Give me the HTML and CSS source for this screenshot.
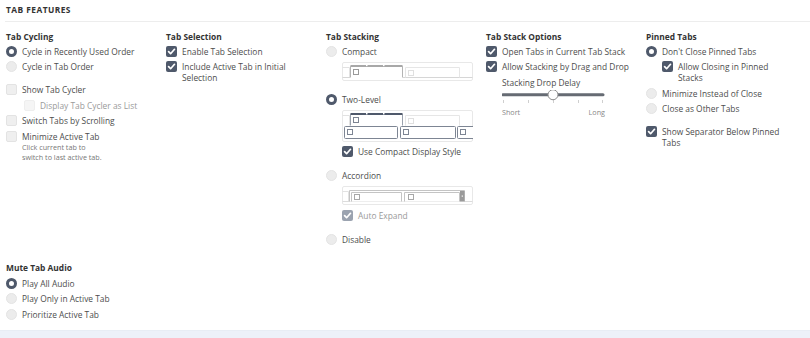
FILE: index.html
```html
<!DOCTYPE html>
<html lang="en">
<head>
<meta charset="utf-8">
<title>Tab Features</title>
<link rel="stylesheet" href="styles.css">
</head>
<body>
<div class="page">
  <div class="head">TAB FEATURES</div>
  <div class="grid">
    <!-- Tab Cycling -->
    <div class="col">
      <div class="title">Tab Cycling</div>
      <div class="opt"><span class="rb on"></span><span class="lbl">Cycle in Recently Used Order</span></div>
      <div class="opt"><span class="rb"></span><span class="lbl">Cycle in Tab Order</span></div>
      <div class="opt gap"><span class="cb"></span><span class="lbl">Show Tab Cycler</span></div>
      <div class="opt nest dis"><span class="cb"></span><span class="lbl">Display Tab Cycler as List</span></div>
      <div class="opt"><span class="cb"></span><span class="lbl">Switch Tabs by Scrolling</span></div>
      <div class="opt"><span class="cb"></span><span class="lbl">Minimize Active Tab</span></div>
      <div class="note">Click current tab to<br>switch to last active tab.</div>
    </div>

    <!-- Tab Selection -->
    <div class="col">
      <div class="title">Tab Selection</div>
      <div class="opt"><span class="cb on"><svg viewBox="0 0 11 11"><path d="M2.6 5.7 L4.6 7.7 L8.5 3.3"/></svg></span><span class="lbl">Enable Tab Selection</span></div>
      <div class="opt"><span class="cb on"><svg viewBox="0 0 11 11"><path d="M2.6 5.7 L4.6 7.7 L8.5 3.3"/></svg></span><span class="lbl narrow">Include Active Tab in Initial Selection</span></div>
    </div>

    <!-- Tab Stacking -->
    <div class="col">
      <div class="title">Tab Stacking</div>
      <div class="opt"><span class="rb"></span><span class="lbl">Compact</span></div>
      <div class="illus il1">
        <svg width="131" height="19" viewBox="0 0 131 19">
          <rect x="0.5" y="0.5" width="130" height="18" rx="1.5" fill="#fff" stroke="#e8e8e8"/>
          <path d="M0.5 5.5 H7.5 V15.5" fill="none" stroke="#e2e2e2"/>
          <path d="M0.5 15.5 H8 M61 15.5 H130.5" stroke="#d6d6d6"/>
          <path d="M8.5 15.5 V4.5 H60.5 V15.5" fill="#fff" stroke="#b4b4b4"/>
          <path d="M8.5 4 H24 M25.5 4 H41 M42.5 4 H60.5" stroke="#a8a8a8" stroke-width="2"/>
          <rect x="11.5" y="7.5" width="5" height="5" fill="none" stroke="#9a9a9a"/>
          <path d="M63.5 15.5 V5.5 H117.5 V15.5" fill="none" stroke="#e6e6e6"/>
          <rect x="66.5" y="8.5" width="5" height="5" fill="none" stroke="#e0e0e0"/>
        </svg>
      </div>
      <div class="opt g2"><span class="rb on"></span><span class="lbl">Two-Level</span></div>
      <div class="illus il2">
        <svg width="131" height="32" viewBox="0 0 131 32">
          <rect x="0.5" y="0.5" width="130" height="31" rx="1.5" fill="#fff" stroke="#e8e8e8"/>
          <path d="M0.5 5.5 H7.5 V15.5" fill="none" stroke="#e2e2e2"/>
          <path d="M8.5 15.5 V4.5 H60.5 V15.5" fill="#fff" stroke="#9aa1ad"/>
          <path d="M8.5 4 H24 M25.5 4 H41 M42.5 4 H60.5" stroke="#4f596b" stroke-width="2"/>
          <rect x="11.5" y="7.5" width="5" height="5" fill="none" stroke="#7d8492"/>
          <path d="M63.5 15.5 V5.5 H117.5 V15.5" fill="none" stroke="#e6e6e6"/>
          <rect x="66.5" y="8.5" width="5" height="5" fill="none" stroke="#e0e0e0"/>
          <rect x="2.5" y="16.5" width="53" height="12" rx="1" fill="#fff" stroke="#7d8593"/>
          <rect x="5.5" y="19.5" width="5" height="5" fill="none" stroke="#7d8593"/>
          <rect x="58.5" y="16.5" width="55" height="12" rx="1" fill="#fff" stroke="#7d8593"/>
          <rect x="61.5" y="19.5" width="5" height="5" fill="none" stroke="#7d8593"/>
          <rect x="115.5" y="16.5" width="20" height="12" rx="1" fill="#fff" stroke="#7d8593"/>
          <rect x="118.5" y="19.5" width="5" height="5" fill="none" stroke="#7d8593"/>
        </svg>
      </div>
      <div class="opt nest g3"><span class="cb on"><svg viewBox="0 0 11 11"><path d="M2.6 5.7 L4.6 7.7 L8.5 3.3"/></svg></span><span class="lbl">Use Compact Display Style</span></div>
      <div class="opt g4"><span class="rb"></span><span class="lbl">Accordion</span></div>
      <div class="illus il3">
        <svg width="131" height="19" viewBox="0 0 131 19">
          <rect x="0.5" y="0.5" width="130" height="18" rx="1.5" fill="#fff" stroke="#e8e8e8"/>
          <path d="M0.5 5.5 H6.5 V15.5" fill="none" stroke="#e2e2e2"/>
          <path d="M0.5 15.5 H130.5" stroke="#dcdcdc"/>
          <path d="M7.5 15.5 V4.5 H122.5 V15.5" fill="#fff" stroke="#c4c4c4"/>
          <path d="M9.5 15.5 V6.5 H59.5 V15.5" fill="none" stroke="#c4c4c4"/>
          <rect x="12.5" y="8.5" width="5" height="5" fill="none" stroke="#a8a8a8"/>
          <path d="M62.5 15.5 V6.5 H117.5 V15.5" fill="none" stroke="#c4c4c4"/>
          <rect x="66.5" y="8.5" width="5" height="5" fill="none" stroke="#a8a8a8"/>
          <rect x="118" y="5" width="4.5" height="10.5" fill="#9a9a9a"/>
          <rect x="119.7" y="9.5" width="1.2" height="1.2" fill="#fff"/>
        </svg>
      </div>
      <div class="opt nest dis g5"><span class="cb on"><svg viewBox="0 0 11 11"><path d="M2.6 5.7 L4.6 7.7 L8.5 3.3"/></svg></span><span class="lbl">Auto Expand</span></div>
      <div class="opt g4"><span class="rb"></span><span class="lbl">Disable</span></div>
    </div>

    <!-- Tab Stack Options -->
    <div class="col">
      <div class="title">Tab Stack Options</div>
      <div class="opt"><span class="cb on"><svg viewBox="0 0 11 11"><path d="M2.6 5.7 L4.6 7.7 L8.5 3.3"/></svg></span><span class="lbl">Open Tabs in Current Tab Stack</span></div>
      <div class="opt"><span class="cb on"><svg viewBox="0 0 11 11"><path d="M2.6 5.7 L4.6 7.7 L8.5 3.3"/></svg></span><span class="lbl">Allow Stacking by Drag and Drop</span></div>
      <div class="slider-block">
        <div class="slider-label">Stacking Drop Delay</div>
        <svg class="slider" width="104" height="17" viewBox="0 0 104 17">
          <path d="M1 4.75 H101" stroke="#666b73" stroke-width="3" stroke-linecap="round"/>
          <g stroke="#cfcfcf" stroke-width="1">
            <path d="M1.5 10 V13 M26.5 10 V13 M51.5 10 V13 M76.5 10 V13 M100.5 10 V13"/>
          </g>
          <circle cx="51" cy="4.75" r="5" fill="#fff" stroke="#8d8d8d"/>
        </svg>
        <div class="slider-ends"><span>Short</span><span>Long</span></div>
      </div>
    </div>

    <!-- Pinned Tabs -->
    <div class="col pinned">
      <div class="title">Pinned Tabs</div>
      <div class="opt"><span class="rb on"></span><span class="lbl">Don't Close Pinned Tabs</span></div>
      <div class="opt nest"><span class="cb on"><svg viewBox="0 0 11 11"><path d="M2.6 5.7 L4.6 7.7 L8.5 3.3"/></svg></span><span class="lbl">Allow Closing in Pinned Stacks</span></div>
      <div class="opt"><span class="rb"></span><span class="lbl">Minimize Instead of Close</span></div>
      <div class="opt"><span class="rb"></span><span class="lbl">Close as Other Tabs</span></div>
      <div class="opt gap"><span class="cb on"><svg viewBox="0 0 11 11"><path d="M2.6 5.7 L4.6 7.7 L8.5 3.3"/></svg></span><span class="lbl">Show Separator Below Pinned Tabs</span></div>
    </div>

    <!-- Mute Tab Audio -->
    <div class="col">
      <div class="title">Mute Tab Audio</div>
      <div class="opt"><span class="rb on"></span><span class="lbl">Play All Audio</span></div>
      <div class="opt"><span class="rb"></span><span class="lbl">Play Only in Active Tab</span></div>
      <div class="opt"><span class="rb"></span><span class="lbl">Prioritize Active Tab</span></div>
    </div>
  </div>
</div>
<div class="strip"></div>
</body>
</html>
```

FILE: styles.css
```css
* { box-sizing: border-box; }

html, body {
  margin: 0;
  padding: 0;
}

body {
  height: 338px;
  overflow: hidden;
  display: flex;
  flex-direction: column;
  background: #fff;
  font-family: "Open Sans", "Noto Sans", sans-serif;
  font-size: 8.4px;
  color: #4d4d4d;
}

.page {
  flex: 1;
}

.head {
  margin-left: 5px;
  padding: 4px 0 6px 1px;
  line-height: 11px;
  font-size: 8.4px;
  font-weight: 700;
  letter-spacing: 0.45px;
  color: #333;
  border-bottom: 1px solid #ededed;
}

.grid {
  display: grid;
  grid-template-columns: repeat(5, 160px);
  row-gap: 12.75px;
  padding: 6.5px 0 0 6px;
}

.col {
  padding-right: 10px;
  display: flex;
  flex-direction: column;
}

.col.pinned {
  padding-right: 22px;
}

.title {
  line-height: 15px;
  font-weight: 700;
  color: #333;
}

.opt {
  display: flex;
  align-items: flex-start;
  gap: 5px;
  padding: 2.25px 0;
  line-height: 11px;
}

.lbl.narrow { max-width: 122px; }

.opt.nest { padding-left: 16px; }
.opt.gap { margin-top: 7.5px; }
.col:first-child .opt.nest { padding-left: 18px; }

.opt.dis .lbl { color: #9a9a9a; }

.rb, .cb {
  flex: none;
  width: 11px;
  height: 11px;
  display: inline-flex;
  align-items: center;
  justify-content: center;
}

.rb {
  border-radius: 50%;
  background: #ececec;
  border: 1px solid #e4e4e4;
}

.rb.on {
  background: #fff;
  border: 3.5px solid #4f596b;
}

.cb {
  border-radius: 2px;
  background: #efefef;
  border: 1px solid #e3e3e3;
}

.cb.on {
  background: #4f596b;
  border: none;
}

.cb svg {
  width: 11px;
  height: 11px;
  display: block;
}

.cb svg path {
  fill: none;
  stroke: #fff;
  stroke-width: 1.7;
  stroke-linecap: round;
  stroke-linejoin: round;
}

.opt.dis .cb { background: #f5f5f5; border-color: #eeeeee; }
.opt.dis .cb.on { background: #9ba3b0; }

.note {
  margin-top: -1.75px;
  padding-left: 16px;
  font-size: 7.2px;
  line-height: 10px;
  color: #777;
}

.illus {
  padding-left: 16px;
  line-height: 0;
}

.illus svg { display: block; }

.il1 { margin-top: 2.75px; }
.g2 { margin-top: 11.25px; }
.il2 { margin-top: 2.25px; }
.g3 { margin-top: 2.25px; }
.g4 { margin-top: 8.5px; }
.il3 { margin-top: 2.25px; }
.g5 { margin-top: 3.25px; }

.slider-block {
  padding-left: 16px;
}

.slider-label {
  line-height: 15.5px;
}

.slider {
  display: block;
}

.slider-ends {
  width: 103px;
  display: flex;
  justify-content: space-between;
  font-size: 7.2px;
  line-height: 10px;
  color: #888;
}

.strip {
  flex: none;
  height: 8px;
  background: #edf1f9;
  border-top: 1px solid #e8edf5;
}
```
